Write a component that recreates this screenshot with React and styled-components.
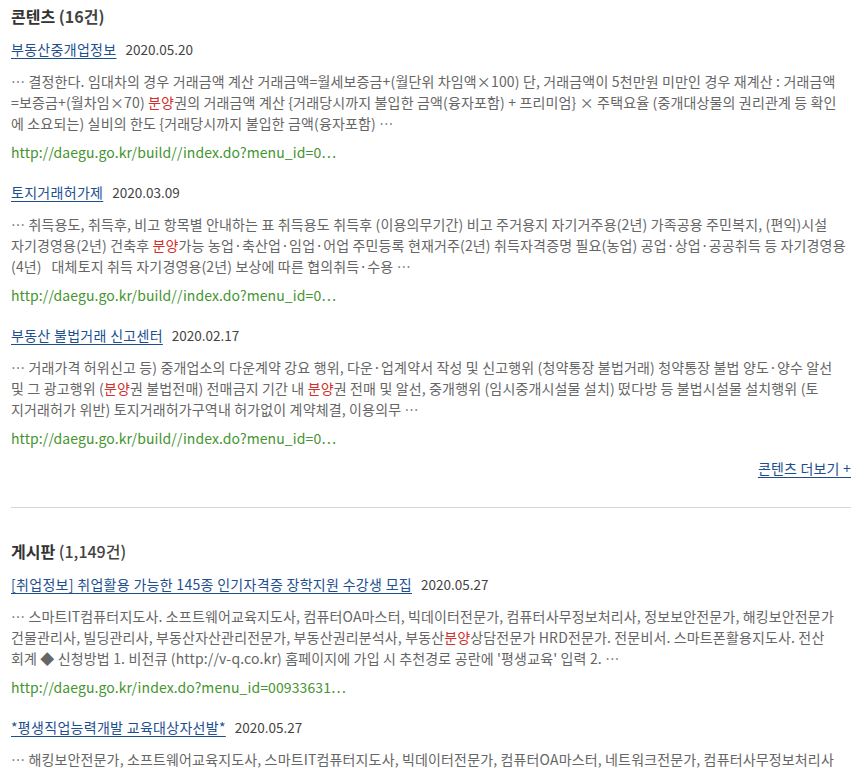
import React from "react";
import styled, { createGlobalStyle } from "styled-components";

const Global = createGlobalStyle`
  html, body { margin: 0; padding: 0; background: #fff; }
  body { font-family: "Noto Sans CJK KR", "Noto Sans", sans-serif; color: #555; }
`;

const Page = styled.div`
  padding: 4px 13px 0 11px;
`;

const Section = styled.section`
  display: flex;
  flex-direction: column;
`;

const SectionTitle = styled.h2`
  margin: 0 0 11px;
  font-size: 16px;
  line-height: 24px;
  font-weight: 700;
  color: #333;
`;

const Count = styled.span`
  font-weight: ${(p) => (p.$light ? 500 : 700)};
  color: #444;
`;

const Item = styled.article`
  display: flex;
  flex-direction: column;
  margin-bottom: ${(p) => (p.$last ? "0" : "19px")};
`;

const TitleRow = styled.div`
  display: flex;
  align-items: baseline;
  gap: 9px;
  font-size: 14px;
  line-height: 21px;
  letter-spacing: 0.3px;
`;

const TitleLink = styled.a`
  color: #1d4f8f;
  text-decoration: underline;
  text-underline-offset: 3px;
  cursor: pointer;
`;

const DateText = styled.span`
  color: #444;
  font-size: 13.5px;
  letter-spacing: 0;
`;

const Snippet = styled.p`
  margin: 11px 0 0;
  font-size: 14px;
  line-height: 21px;
  color: #666;
  white-space: nowrap;
  letter-spacing: 0.15px;
`;

const Hl = styled.span`
  color: #d3302b;
`;

const Url = styled.div`
  margin-top: 8px;
  font-size: 14px;
  line-height: 21px;
  color: #44952f;
  letter-spacing: 0.1px;
`;

const MoreRow = styled.div`
  display: flex;
  justify-content: flex-end;
  margin-top: 9px;
  font-size: 14px;
  line-height: 21px;
  letter-spacing: 0.2px;
`;

const MoreLink = styled.a`
  color: #1d4f8f;
  text-decoration: underline;
  text-underline-offset: 3px;
  cursor: pointer;
`;

const Divider = styled.hr`
  border: 0;
  border-top: 1px solid #d6d6d6;
  margin: 28px 0 31px;
`;

const highlight = (text) =>
  text.split(/(분양)/).map((part, i) =>
    part === "분양" ? <Hl key={i}>{part}</Hl> : <React.Fragment key={i}>{part}</React.Fragment>
  );

const Result = ({ title, date, lines, url, last }) => (
  <Item $last={last}>
    <TitleRow>
      <TitleLink>{title}</TitleLink>
      <DateText>{date}</DateText>
    </TitleRow>
    <Snippet>
      {lines.map((l, i) => (
        <React.Fragment key={i}>
          {highlight(l)}
          {i < lines.length - 1 && <br />}
        </React.Fragment>
      ))}
    </Snippet>
    <Url>{url}</Url>
  </Item>
);

const contents = [
  {
    title: "부동산중개업정보",
    date: "2020.05.20",
    lines: [
      "… 결정한다. 임대차의 경우 거래금액 계산 거래금액=월세보증금+(월단위 차임액×100) 단, 거래금액이 5천만원 미만인 경우 재계산 : 거래금액",
      "=보증금+(월차임×70) 분양권의 거래금액 계산 {거래당시까지 불입한 금액(융자포함) + 프리미엄} × 주택요율 (중개대상물의 권리관계 등 확인",
      "에 소요되는) 실비의 한도 {거래당시까지 불입한 금액(융자포함) …",
    ],
    url: "http://daegu.go.kr/build//index.do?menu_id=0…",
  },
  {
    title: "토지거래허가제",
    date: "2020.03.09",
    lines: [
      "… 취득용도, 취득후, 비고 항목별 안내하는 표 취득용도 취득후 (이용의무기간) 비고 주거용지 자기거주용(2년) 가족공용 주민복지, (편익)시설",
      "자기경영용(2년) 건축후 분양가능 농업·축산업·임업·어업 주민등록 현재거주(2년) 취득자격증명 필요(농업) 공업·상업·공공취득 등 자기경영용",
      "(4년) \u00a0\u00a0대체토지 취득 자기경영용(2년) 보상에 따른 협의취득·수용 …",
    ],
    url: "http://daegu.go.kr/build//index.do?menu_id=0…",
  },
  {
    title: "부동산 불법거래 신고센터",
    date: "2020.02.17",
    lines: [
      "… 거래가격 허위신고 등) 중개업소의 다운계약 강요 행위, 다운·업계약서 작성 및 신고행위 (청약통장 불법거래) 청약통장 불법 양도·양수 알선",
      "및 그 광고행위 (분양권 불법전매) 전매금지 기간 내 분양권 전매 및 알선, 중개행위 (임시중개시설물 설치) 떴다방 등 불법시설물 설치행위 (토",
      "지거래허가 위반) 토지거래허가구역내 허가없이 계약체결, 이용의무 …",
    ],
    url: "http://daegu.go.kr/build//index.do?menu_id=0…",
  },
];

const boards = [
  {
    title: "[취업정보] 취업활용 가능한 145종 인기자격증 장학지원 수강생 모집",
    date: "2020.05.27",
    lines: [
      "… 스마트IT컴퓨터지도사. 소프트웨어교육지도사, 컴퓨터OA마스터, 빅데이터전문가, 컴퓨터사무정보처리사, 정보보안전문가, 해킹보안전문가",
      "건물관리사, 빌딩관리사, 부동산자산관리전문가, 부동산권리분석사, 부동산분양상담전문가 HRD전문가. 전문비서. 스마트폰활용지도사. 전산",
      "회계 ◆ 신청방법 1. 비전큐 (http://v-q.co.kr) 홈페이지에 가입 시 추천경로 공란에 '평생교육' 입력 2. …",
    ],
    url: "http://daegu.go.kr/index.do?menu_id=00933631…",
  },
  {
    title: "*평생직업능력개발 교육대상자선발*",
    date: "2020.05.27",
    lines: [
      "… 해킹보안전문가, 소프트웨어교육지도사, 스마트IT컴퓨터지도사, 빅데이터전문가, 컴퓨터OA마스터, 네트워크전문가, 컴퓨터사무정보처리사",
      "건물관리사, 빌딩관리사, 부동산자산관리전문가, 부동산권리분석사, 부동산분양상담전문가 HRD전문가. 전문비서. 스마트폰활용지도사. 전산",
      "회계 ◆ 신청방법 1. 비전큐 (http://v-q.co.kr) 홈페이지에 가입 시 추천경로 공란에 '평생교육' 입력 2. …",
    ],
    url: "http://daegu.go.kr/index.do?menu_id=00933632…",
  },
];

export default function App() {
  return (
    <Page>
      <Global />
      <Section>
        <SectionTitle>
          콘텐츠 <Count>(16건)</Count>
        </SectionTitle>
        {contents.map((r, i) => (
          <Result key={i} {...r} last={i === contents.length - 1} />
        ))}
        <MoreRow>
          <MoreLink>콘텐츠 더보기 +</MoreLink>
        </MoreRow>
      </Section>
      <Divider />
      <Section>
        <SectionTitle>
          게시판 <Count $light>(1,149건)</Count>
        </SectionTitle>
        {boards.map((r, i) => (
          <Result key={i} {...r} last={i === boards.length - 1} />
        ))}
      </Section>
    </Page>
  );
}
